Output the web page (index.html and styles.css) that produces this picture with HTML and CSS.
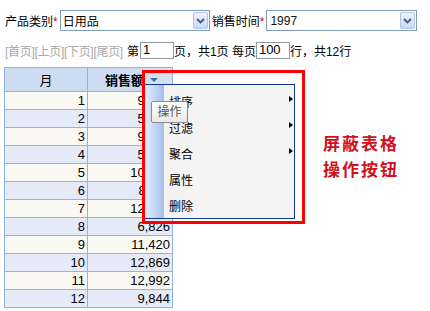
FILE: index.html
```html
<!DOCTYPE html>
<html lang="zh-CN">
<head>
<meta charset="utf-8">
<title>销售表</title>
<link rel="stylesheet" href="styles.css">
</head>
<body>
<div class="page">
  <div class="filters">
    <span class="label">产品类别<em>*</em></span>
    <div class="select s1"><span class="val">日用品</span><span class="btn"><svg width="9" height="6" viewBox="0 0 9 6"><path d="M1 1 L4.5 4.5 L8 1" fill="none" stroke="#3f5a8a" stroke-width="1.8"/></svg></span></div>
    <span class="label">销售时间<em>*</em></span>
    <div class="select s2"><span class="val num">1997</span><span class="btn"><svg width="9" height="6" viewBox="0 0 9 6"><path d="M1 1 L4.5 4.5 L8 1" fill="none" stroke="#3f5a8a" stroke-width="1.8"/></svg></span></div>
  </div>
  <div class="pager">
    <span class="nav">[首页][上页][下页][尾页]</span>
    <span class="txt">第</span>
    <span class="input w1">1</span>
    <span class="txt">页，共1页 每页</span>
    <span class="input w2">100</span>
    <span class="txt">行，共12行</span>
  </div>
  <div class="grid-wrap">
    <table class="grid">
      <colgroup><col class="c1"><col class="c2"></colgroup>
      <thead>
        <tr><th>月</th><th><div class="hcell"><span class="htitle">销售额</span><span class="harrow"></span></div></th></tr>
      </thead>
      <tbody>
        <tr><td>1</td><td>9,612</td></tr>
        <tr><td>2</td><td>5,732</td></tr>
        <tr><td>3</td><td>9,238</td></tr>
        <tr><td>4</td><td>5,483</td></tr>
        <tr><td>5</td><td>10,364</td></tr>
        <tr><td>6</td><td>8,115</td></tr>
        <tr><td>7</td><td>12,051</td></tr>
        <tr><td>8</td><td>6,826</td></tr>
        <tr><td>9</td><td>11,420</td></tr>
        <tr><td>10</td><td>12,869</td></tr>
        <tr><td>11</td><td>12,992</td></tr>
        <tr><td>12</td><td>9,844</td></tr>
      </tbody>
    </table>
    <div class="menu">
      <div class="strip"></div>
      <ul class="items">
        <li class="sub">排序</li>
        <li class="sub">过滤</li>
        <li class="sub">聚合</li>
        <li>属性</li>
        <li>删除</li>
      </ul>
    </div>
    <div class="tip">操作</div>
    <div class="highlight"></div>
    <div class="note">屏蔽表格<br>操作按钮</div>
  </div>
</div>
</body>
</html>
```
FILE: styles.css
```css
html, body {
  margin: 0;
  padding: 0;
  background: #ffffff;
}
body {
  font-family: "Liberation Sans", "Noto Sans CJK SC", sans-serif;
  font-size: 12px;
  color: #000;
}
.page {
  padding: 10px 0 0 5px;
}
.filters {
  display: flex;
  align-items: center;
  height: 21px;
}
.label {
  margin-right: 2px;
  white-space: nowrap;
}
.label em {
  color: #e00000;
  font-style: normal;
}
.select {
  box-sizing: border-box;
  height: 21px;
  border: 1px solid #7f9db9;
  background: #fff;
  display: flex;
  align-items: center;
  justify-content: space-between;
  padding: 0 1px 0 2px;
}
.s1 { width: 150px; margin-right: 2px; }
.s2 { width: 151px; }
.val {
  font-size: 12px;
}
.val.num { color: #111; padding-left: 1px; }
.btn {
  box-sizing: border-box;
  width: 15px;
  height: 17px;
  border: 1px solid #b2c6e8;
  border-radius: 2px;
  background: linear-gradient(#eef3fd, #c9d8f4);
  display: flex;
  align-items: center;
  justify-content: center;
}
.pager {
  display: flex;
  align-items: center;
  height: 17px;
  margin-top: 11px;
  white-space: pre;
}
.nav {
  color: #a8a8a8;
  margin-right: 4px;
  letter-spacing: -0.3px;
}
.input {
  box-sizing: border-box;
  height: 17px;
  border: 1px solid #8e9aa3;
  font-size: 13px;
  line-height: 17px;
  padding-left: 2px;
  display: flex;
  align-items: flex-end;
}
.w1 { width: 34px; margin-left: 1px; }
.w2 { width: 34px; }
.grid-wrap {
  position: relative;
  margin-top: 8px;
  margin-left: -1px;
  width: 420px;
}
.grid {
  border-collapse: collapse;
  table-layout: fixed;
  width: 168px;
  font-size: 13px;
}
.c1 { width: 83px; }
.c2 { width: 85px; }
.grid th, .grid td {
  border: 1px solid #93b4e0;
  padding: 0;
}
.grid th {
  height: 23px;
  background: #cddcf1;
  font-weight: normal;
  text-align: center;
}
.grid th .htitle {
  font-weight: bold;
}
.hcell {
  display: flex;
  align-items: center;
  height: 23px;
}
.htitle {
  flex: 1;
  text-align: center;
  padding-left: 16px;
}
.harrow {
  width: 27px;
  height: 23px;
  display: flex;
  align-items: center;
  background: #d3e0f2;
}
.harrow::before {
  content: "";
  margin-left: 5px;
  border-left: 4px solid transparent;
  border-right: 4px solid transparent;
  border-top: 4px solid #4b6a96;
}
.grid td {
  height: 17px;
  text-align: right;
  padding-right: 2px;
  line-height: 17px;
}
.grid tbody tr:nth-child(odd) td { background: #faf8f3; }
.grid tbody tr:nth-child(even) td { background: #e5eaf9; }
.menu {
  position: absolute;
  left: 140px;
  top: 17px;
  width: 151px;
  height: 135px;
  box-sizing: border-box;
  border: 1px solid #16379a;
  background: #f4f4f4;
  display: flex;
  overflow: hidden;
}
.strip {
  width: 19px;
  background: linear-gradient(to right, #e6eefb, #a3c0ec);
  flex: none;
}
.items {
  list-style: none;
  margin: 0;
  padding: 5px 0 0 5px;
  flex: 1;
  font-size: 12px;
}
.items li {
  height: 26px;
  line-height: 26px;
  position: relative;
}
.items li.sub::after {
  content: "";
  position: absolute;
  right: 1px;
  top: 6px;
  border-top: 3.5px solid transparent;
  border-bottom: 3.5px solid transparent;
  border-left: 4px solid #000;
}
.tip {
  position: absolute;
  left: 147px;
  top: 34px;
  box-sizing: border-box;
  width: 37px;
  height: 22px;
  border: 1px solid #8a8a8a;
  border-radius: 2px;
  background: linear-gradient(#ffffff, #e9e9e9);
  color: #555;
  font-size: 12px;
  line-height: 20px;
  text-align: center;
}
.highlight {
  position: absolute;
  left: 138px;
  top: 3px;
  width: 163px;
  height: 154px;
  box-sizing: border-box;
  border: 3px solid #ff0000;
}
.note {
  position: absolute;
  left: 319px;
  top: 63px;
  color: #d0111c;
  font-family: "Noto Sans CJK SC", sans-serif;
  font-size: 17px;
  font-weight: bold;
  line-height: 26px;
  letter-spacing: 2px;
}
```
